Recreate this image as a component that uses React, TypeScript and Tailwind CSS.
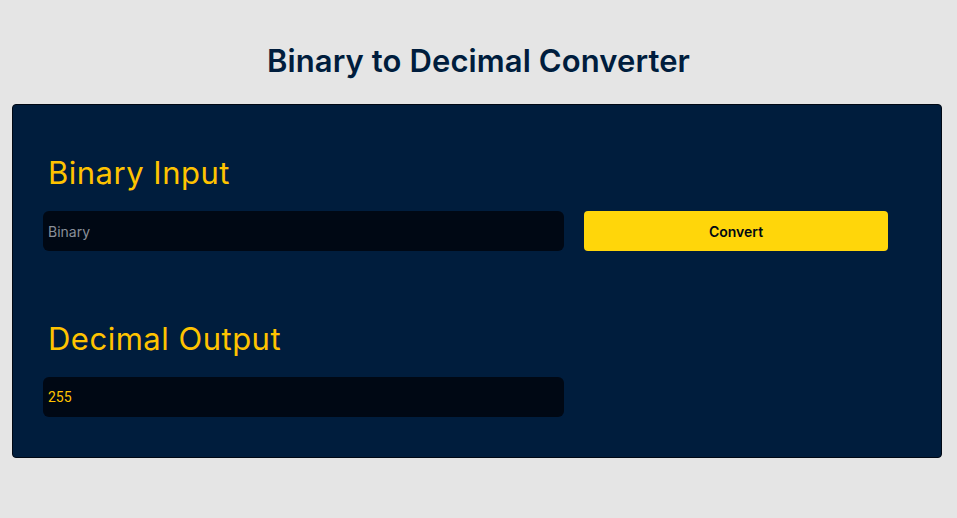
import { useState } from 'react';

export default function App() {
  const [binary, setBinary] = useState('');
  const [decimal, setDecimal] = useState('255');

  const handleConvert = () => {
    if (/^[01]+$/.test(binary)) setDecimal(String(parseInt(binary, 2)));
  };

  return (
    <div className="min-h-[518px] w-full bg-[#e5e5e5] pt-[41px] font-['Inter','Liberation_Sans',sans-serif]">
      <h1 className="text-center text-[31px] leading-[40px] font-semibold text-[#001d3d] tracking-[0.1px]">
        Binary to Decimal Converter
      </h1>

      <div className="ml-[12px] mt-[23px] w-[930px] rounded-[4px] border border-[#000814] bg-[#001d3d] pl-[30px] pt-[45px] pb-[40px]">
        {/* Input section */}
        <h2 className="pl-[5px] text-[31px] leading-[45px] font-normal tracking-[0.5px] text-[#ffc300]">Binary Input</h2>
        <div className="mt-[16px] flex gap-[20px]">
          <input
            value={binary}
            onChange={(e) => setBinary(e.target.value)}
            placeholder="Binary"
            className="h-[40px] w-[521px] rounded-[6px] bg-[#000814] pl-[5px] text-[14px] text-[#ffc300] outline-none placeholder:text-[#8a8f99]"
          />
          <button
            onClick={handleConvert}
            className="h-[40px] w-[304px] rounded-[4px] bg-[#ffd60a] text-[14px] font-semibold text-[#000814]"
          >
            Convert
          </button>
        </div>

        {/* Output section */}
        <h2 className="mt-[65px] pl-[5px] text-[31px] leading-[45px] font-normal tracking-[0.5px] text-[#ffc300]">Decimal Output</h2>
        <div className="mt-[16px]">
          <input
            value={decimal}
            readOnly
            className="h-[40px] w-[521px] rounded-[6px] bg-[#000814] pl-[5px] text-[14px] text-[#ffc300] outline-none font-['Roboto',sans-serif]"
          />
        </div>
      </div>
    </div>
  );
}
